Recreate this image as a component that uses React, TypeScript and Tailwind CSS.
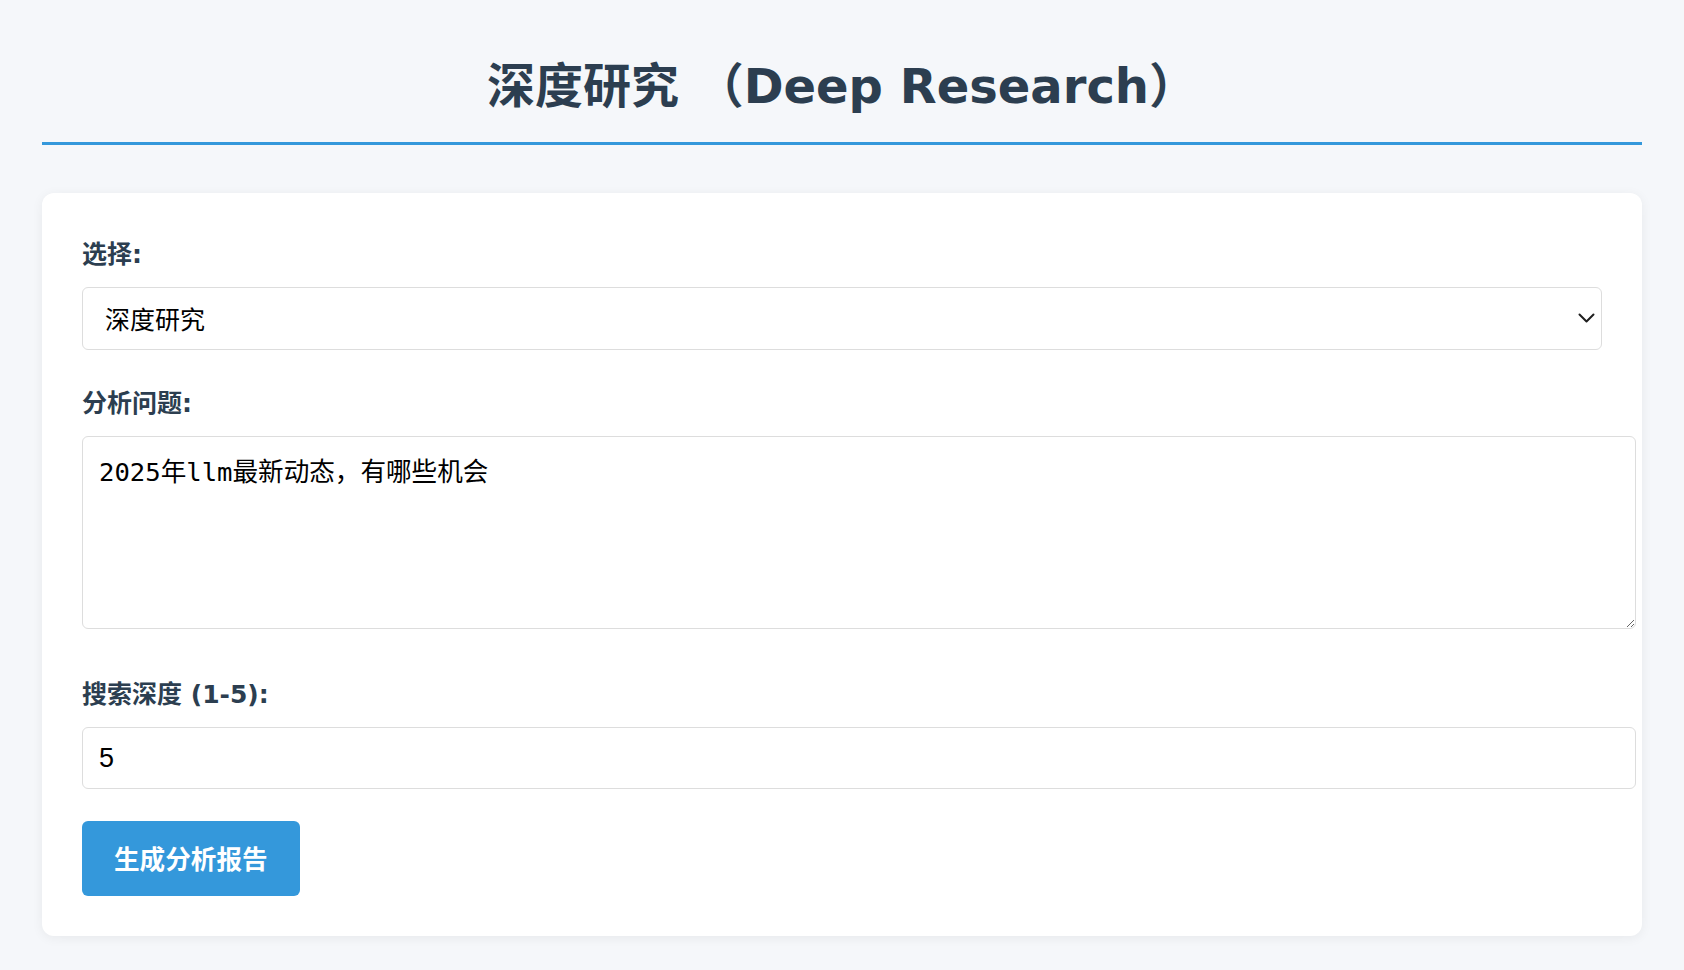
import { useState } from 'react';

const labelFont = {
  fontFamily: '"DejaVu Sans", "Noto Sans CJK SC", sans-serif',
};

export default function App() {
  const [mode, setMode] = useState('deep');
  const [question, setQuestion] = useState('2025年llm最新动态，有哪些机会');
  const [depth, setDepth] = useState('5');

  return (
    <div className="min-h-screen bg-[#f5f7fa] font-['DejaVu_Sans','Noto_Sans_CJK_SC',sans-serif]">
      <div className="mx-auto max-w-[1600px] pb-[34px]">
        {/* Header */}
        <div className="border-b-[3px] border-[#3498db] pt-[57px] pb-[27px]">
          <h1 className="text-center text-[48px] leading-[58px] font-bold text-[#2c3e50]">
            深度研究 （Deep Research）
          </h1>
        </div>

        {/* Form card */}
        <form
          onSubmit={(e) => e.preventDefault()}
          className="mt-[48px] rounded-[12px] bg-white px-[40px] pt-[40px] pb-[40px] shadow-[0_2px_12px_rgba(0,0,0,0.06)]"
        >
          <div className="mb-[32px]">
            <label
              style={labelFont}
              className="mb-[16px] block pt-[6px] text-[25px] leading-[32px] font-bold text-[#2c3e50]"
            >
              选择:
            </label>
            <div className="relative">
              <select
                value={mode}
                onChange={(e) => setMode(e.target.value)}
                className="block h-[63px] w-full appearance-none rounded-[6px] border border-[#dddddd] bg-white pl-[22px] pr-12 text-[25px] text-black outline-none font-['Noto_Sans_CJK_SC',sans-serif]"
              >
                <option value="deep">深度研究</option>
                <option value="quick">快速研究</option>
              </select>
              <svg
                className="pointer-events-none absolute right-[7px] top-[26px]"
                width="17"
                height="11"
                viewBox="0 0 17 11"
                fill="none"
              >
                <path
                  d="M1.5 1.5 L8.5 8.5 L15.5 1.5"
                  stroke="#1f1f1f"
                  strokeWidth="2"
                  strokeLinecap="round"
                  strokeLinejoin="round"
                />
              </svg>
            </div>
          </div>

          <div className="mb-[44px]">
            <label
              style={labelFont}
              className="mb-[16px] block pt-[6px] text-[25px] leading-[32px] font-bold text-[#2c3e50]"
            >
              分析问题:
            </label>
            <textarea
              value={question}
              onChange={(e) => setQuestion(e.target.value)}
              className="box-content block h-[159px] w-full rounded-[6px] border border-[#dddddd] bg-white px-4 pt-[20px] pb-[12px] text-[25.6px] leading-[30px] text-black outline-none font-['DejaVu_Sans_Mono','Noto_Sans_CJK_SC',monospace]"
            />
          </div>

          <div className="mb-[32px]">
            <label
              style={labelFont}
              className="mb-[16px] block pt-[6px] text-[25px] leading-[32px] font-bold text-[#2c3e50]"
            >
              搜索深度 (1-5):
            </label>
            <input
              type="number"
              min={1}
              max={5}
              value={depth}
              onChange={(e) => setDepth(e.target.value)}
              className="box-content block h-[28px] w-full rounded-[6px] border border-[#dddddd] bg-white p-4 text-[27px] text-black outline-none font-['Liberation_Sans',sans-serif] [appearance:textfield]"
            />
          </div>

          <button
            type="submit"
            className="flex h-[75px] items-center rounded-[6px] bg-[#3498db] px-[32px] text-[25.6px] font-bold text-white font-['Noto_Sans_CJK_SC',sans-serif]"
          >
            生成分析报告
          </button>
        </form>
      </div>
    </div>
  );
}
